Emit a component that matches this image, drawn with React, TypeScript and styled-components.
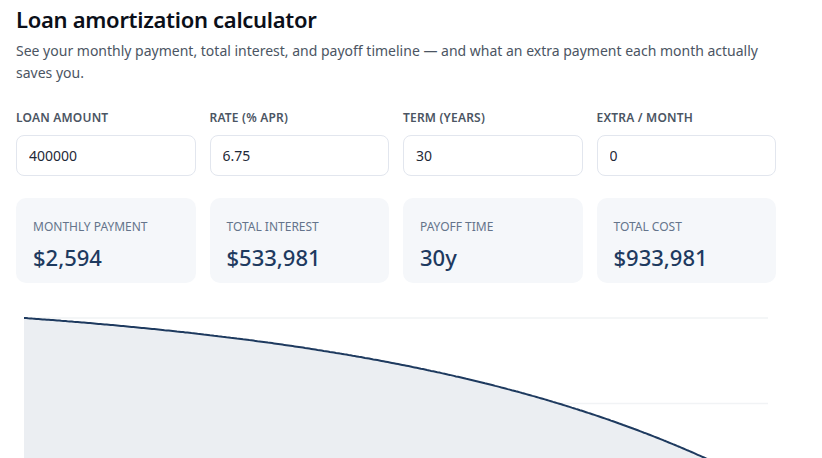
import React, { useMemo, useState } from "react";
import styled, { createGlobalStyle } from "styled-components";

const GlobalStyle = createGlobalStyle`
  * { box-sizing: border-box; }
  body {
    margin: 0;
    background: #ffffff;
    font-family: "Noto Sans", "Open Sans", "Liberation Sans", sans-serif;
    color: #111827;
  }
`;

const Page = styled.div`
  width: 792px;
  padding: 4px 16px 0 16px;
`;

const Title = styled.h1`
  margin: 0;
  font-size: 22px;
  line-height: 30px;
  font-weight: 600;
  letter-spacing: -0.3px;
  color: #0b0f19;
`;

const Lead = styled.p`
  margin: 6px 0 0 0;
  max-width: 760px;
  font-size: 14px;
  line-height: 22px;
  color: #4b5563;
`;

const Grid = styled.div<{ $top: number }>`
  display: grid;
  grid-template-columns: repeat(4, minmax(0, 1fr));
  gap: 14px;
  width: 760px;
  margin-top: ${(p) => p.$top}px;
`;

const Field = styled.label`
  display: flex;
  flex-direction: column;
  gap: 9px;
  min-width: 0;
`;

const FieldLabel = styled.span`
  font-size: 12px;
  line-height: 16px;
  font-weight: 600;
  letter-spacing: 0.2px;
  text-transform: uppercase;
  color: #4b5563;
`;

const Input = styled.input`
  width: 100%;
  min-width: 0;
  height: 41px;
  padding: 0 12px;
  border: 1px solid #e2e6ee;
  border-radius: 8px;
  font-family: inherit;
  font-size: 14px;
  color: #1f2937;
  background: #fff;
  outline: none;
`;

const Stat = styled.div`
  height: 85px;
  padding: 21px 17px 0 17px;
  border-radius: 10px;
  background: #f5f7fa;
`;

const StatLabel = styled.div`
  font-size: 12px;
  line-height: 16px;
  text-transform: uppercase;
  color: #64748b;
`;

const StatValue = styled.div`
  margin-top: 6px;
  font-size: 22px;
  line-height: 32px;
  font-weight: 500;
  color: #1e3a5f;
`;

const ChartBox = styled.div`
  margin-top: 27px;
  width: 760px;
`;

const W = 760;
const H = 200;
const PAD_X = 8;
const TOP = 8;
const PLOT_H = 171;

const money = (n: number) => "$" + Math.round(n).toLocaleString("en-US");

export default function App() {
  const [amount, setAmount] = useState("400000");
  const [rate, setRate] = useState("6.75");
  const [term, setTerm] = useState("30");
  const [extra, setExtra] = useState("0");

  const calc = useMemo(() => {
    const P = Number(amount) || 0;
    const r = (Number(rate) || 0) / 1200;
    const n = (Number(term) || 0) * 12;
    const x = Number(extra) || 0;
    const pay = r > 0 ? (P * r) / (1 - Math.pow(1 + r, -n)) : P / n;
    const balances = [P];
    let bal = P;
    let interest = 0;
    let months = 0;
    while (bal > 0.005 && months < n) {
      const i = bal * r;
      interest += i;
      bal = Math.max(0, bal + i - pay - x);
      balances.push(bal);
      months++;
    }
    return { pay, interest, months, balances, P, n };
  }, [amount, rate, term, extra]);

  const plotW = W - PAD_X * 2;
  const pts = calc.balances.map((b, i) => {
    const px = PAD_X + (i / calc.n) * plotW;
    const py = TOP + (1 - b / calc.P) * PLOT_H;
    return [px, py] as const;
  });
  const line = pts.map(([a, b], i) => `${i ? "L" : "M"}${a.toFixed(1)},${b.toFixed(1)}`).join(" ");
  const last = pts[pts.length - 1];
  const area = `${line} L${last[0].toFixed(1)},${TOP + PLOT_H} L${PAD_X},${TOP + PLOT_H} Z`;

  const years = Math.floor(calc.months / 12);
  const rem = calc.months % 12;

  return (
    <Page>
      <GlobalStyle />
      <Title>Loan amortization calculator</Title>
      <Lead>
        See your monthly payment, total interest, and payoff timeline — and what an extra payment each month actually
        saves you.
      </Lead>

      <Grid $top={26}>
        <Field>
          <FieldLabel>Loan amount</FieldLabel>
          <Input value={amount} onChange={(e) => setAmount(e.target.value)} />
        </Field>
        <Field>
          <FieldLabel>Rate (% APR)</FieldLabel>
          <Input value={rate} onChange={(e) => setRate(e.target.value)} />
        </Field>
        <Field>
          <FieldLabel>Term (years)</FieldLabel>
          <Input value={term} onChange={(e) => setTerm(e.target.value)} />
        </Field>
        <Field>
          <FieldLabel>Extra / month</FieldLabel>
          <Input value={extra} onChange={(e) => setExtra(e.target.value)} />
        </Field>
      </Grid>

      <Grid $top={22}>
        <Stat>
          <StatLabel>Monthly payment</StatLabel>
          <StatValue>{money(calc.pay)}</StatValue>
        </Stat>
        <Stat>
          <StatLabel>Total interest</StatLabel>
          <StatValue>{money(calc.interest)}</StatValue>
        </Stat>
        <Stat>
          <StatLabel>Payoff time</StatLabel>
          <StatValue>{rem ? `${years}y ${rem}m` : `${years}y`}</StatValue>
        </Stat>
        <Stat>
          <StatLabel>Total cost</StatLabel>
          <StatValue>{money(calc.P + calc.interest)}</StatValue>
        </Stat>
      </Grid>

      <ChartBox>
        <svg width={W} height={H} viewBox={`0 0 ${W} ${H}`}>
          {[0, 0.5, 1].map((f) => (
            <line
              key={f}
              x1={PAD_X}
              x2={W - PAD_X}
              y1={TOP + f * PLOT_H}
              y2={TOP + f * PLOT_H}
              stroke="#f1f3f5"
              strokeWidth={1.5}
            />
          ))}
          <path d={area} fill="#ebeef2" />
          <path d={line} fill="none" stroke="#1e3a5f" strokeWidth={2} />
        </svg>
      </ChartBox>
    </Page>
  );
}
